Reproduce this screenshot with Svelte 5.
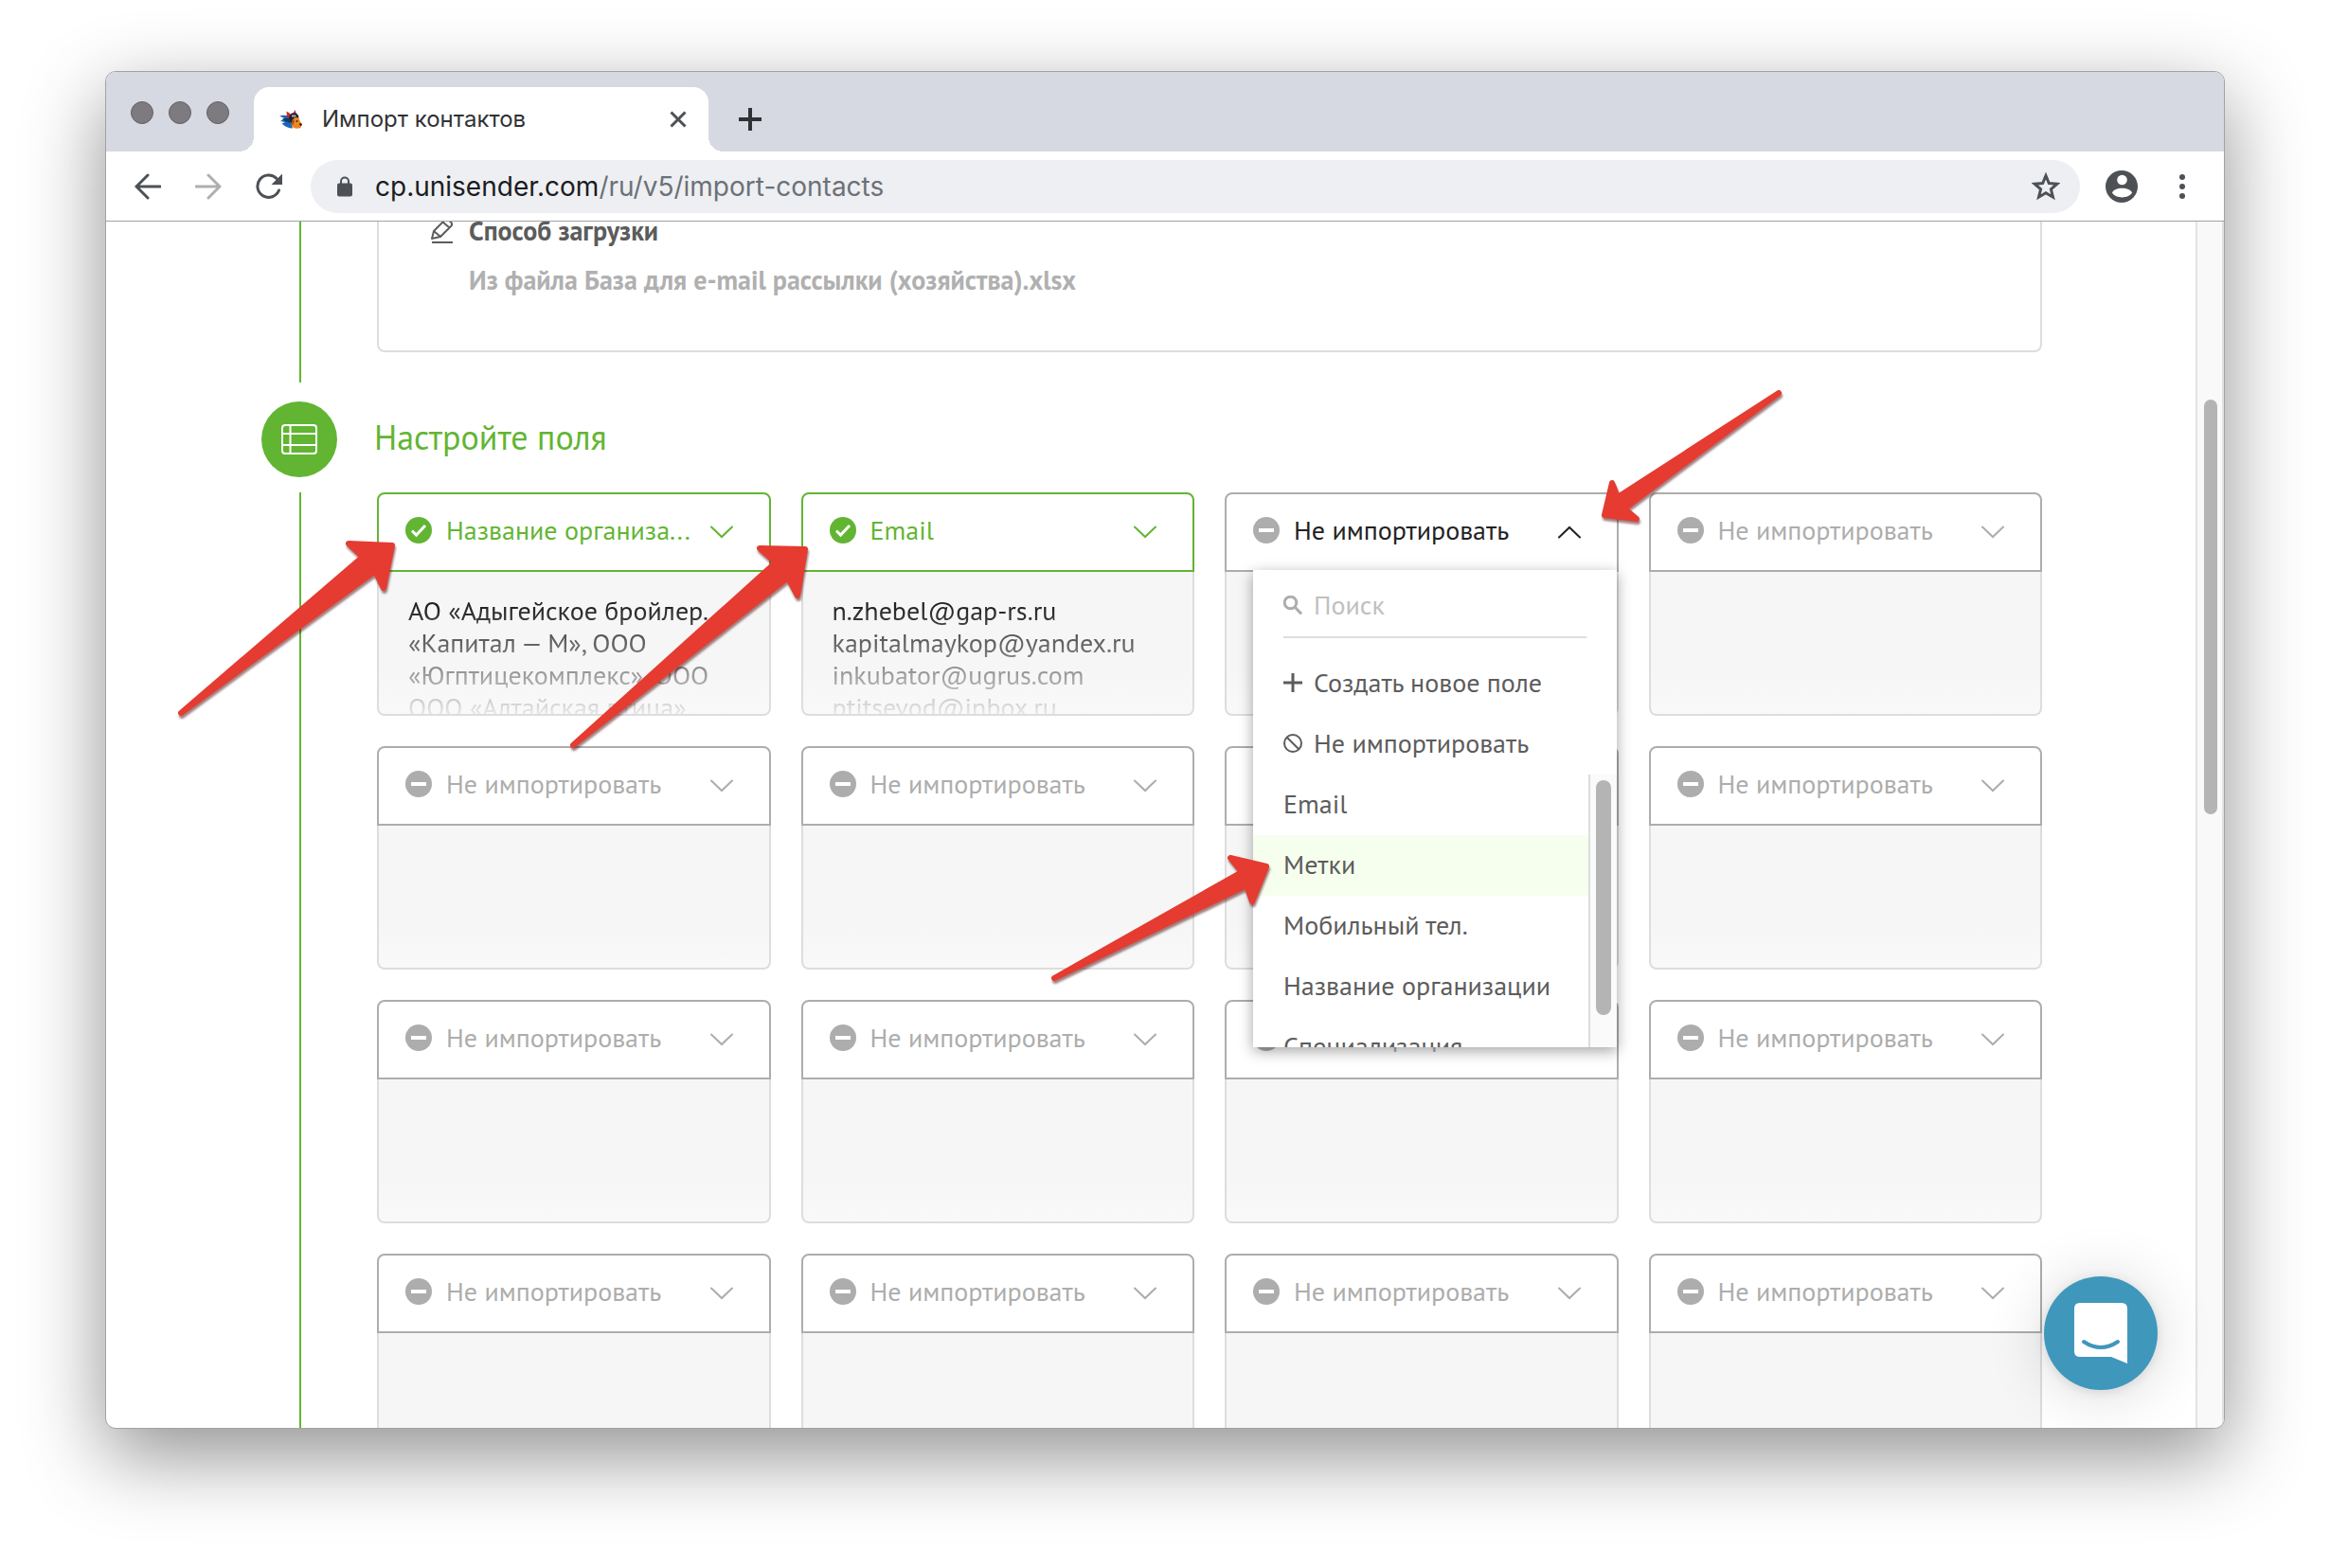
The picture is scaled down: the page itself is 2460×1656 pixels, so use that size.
<script lang="ts">
  type Field = { label: string; matched?: boolean; open?: boolean; lines?: string[] };

  const skip = 'Не импортировать';
  const fields: Field[] = [
    {
      label: 'Название организа...',
      matched: true,
      lines: ['АО «Адыгейское бройлер.', '«Капитал — М», ООО', '«Югптицекомплекс», ООО', 'ООО «Алтайская птица»'],
    },
    {
      label: 'Email',
      matched: true,
      lines: ['n.zhebel@gap-rs.ru', 'kapitalmaykop@yandex.ru', 'inkubator@ugrus.com', 'ptitsevod@inbox.ru'],
    },
    { label: skip, open: true },
    ...Array.from({ length: 13 }, () => ({ label: skip })),
  ];

  const options = ['Email', 'Метки', 'Мобильный тел.', 'Название организации', 'Специализация'];
  const hovered = 'Метки';

  const arrows = [
    '191,753 383,588 368,574 414,576 405,621 396,603',
    '605,787 819,594 802,579 850,580 842,629 832,610',
    '1878,415 1708,525 1702,510 1694,544 1728,548 1715,537',
    '1113,1033 1311,921 1299,906 1337,915 1322,952 1316,935',
  ];
</script>

{#snippet chevron(up: boolean)}
  <svg class="chevron" viewBox="0 0 24 14" aria-hidden="true">
    <path d={up ? 'M1 12.5 12 2l11 10.5' : 'M1 1.5 12 12 23 1.5'} />
  </svg>
{/snippet}

<div class="desktop">
  <div class="window">
    <header class="tabs">
      <div class="lights"><i></i><i></i><i></i></div>
      <div class="tab">
        <svg class="favicon" viewBox="0 0 24 20" aria-hidden="true">
          <path d="M0 6.500q5-1.500 11 .5l3 12.500q-6 0-11.500-5L6 13l-5-1 4.500-3z" fill="#1c66b8" />
          <path d="m3 9.500 7-1 1.500 5.500L5 11.500z" fill="#123a70" />
          <path d="M8 7.500 7.500 1.500l4 2.500L10 9zM14.500 3.500 16.500 0 18 4.500z" fill="#d9222f" />
          <path d="M10 9.500C10 4 14 2.500 17 3.500c2.500.8 3.500 3 3.500 5L16 10l-3.500 4.500z" fill="#1f2227" />
          <path d="M13 5.500h4.500v2H13z" fill="#a9b2bd" />
          <path d="M15 9q3-2 5.500 0 1.500 4 3.500 6l-1.500 4q-4 1.500-7.500 0-3-2-2.500-5z" fill="#ec8523" />
          <path d="m13.500 10.500 2.500 1-2 5-1.500-2z" fill="#a24f14" />
          <path d="m21.500 14 2.500 1-1 2-2-1zM18 11l1.500.5-.5 1.500-1.500-.5z" fill="#221d1e" />
        </svg>
        <span class="tab-title">Импорт контактов</span>
        <button class="tab-close" aria-label="Закрыть вкладку">
          <svg viewBox="0 0 18 18"><path d="m1.500 1.500 15 15m0-15-15 15" /></svg>
        </button>
      </div>
      <button class="new-tab" aria-label="Новая вкладка">
        <svg viewBox="0 0 24 24"><path d="M12 0v24M0 12h24" /></svg>
      </button>
    </header>

    <nav class="toolbar">
      <button class="tool" aria-label="Назад">
        <svg viewBox="0 0 28 28"><path d="M27 14H3M14 2 2 14l12 12" /></svg>
      </button>
      <button class="tool dim" aria-label="Вперёд">
        <svg viewBox="0 0 28 28"><path d="M1 14h24M14 2l12 12-12 12" /></svg>
      </button>
      <button class="tool" aria-label="Обновить">
        <svg viewBox="0 0 28 28">
          <path d="M24.500 18A11.700 11.700 0 1 1 22 5.500" />
          <path class="solid" d="M28 .5v11.500H16.500z" />
        </svg>
      </button>
      <div class="address">
        <svg class="lock" viewBox="0 0 16 22" aria-hidden="true">
          <path d="M4 9V5.500a4 4 0 0 1 8 0V9" fill="none" stroke="#4d5156" stroke-width="2" />
          <rect y="7.500" width="16" height="14" rx="2" fill="#4d5156" />
        </svg>
        <div class="url" role="textbox" tabindex="0" aria-label="Адрес">cp.unisender.com<span>/ru/v5/import-contacts</span></div>
        <button class="star" aria-label="Добавить в закладки">
          <svg viewBox="0 0 30 30"><path d="m15 3.500 3.300 8 8.700.7-6.600 5.600 2.100 8.400-7.500-4.500-7.500 4.500 2.100-8.400L3 12.200l8.700-.7z" /></svg>
        </button>
      </div>
      <button class="profile" aria-label="Профиль">
        <svg viewBox="0 0 34 34">
          <circle cx="17" cy="17" r="17" fill="#4d5156" />
          <circle cx="17.500" cy="10" r="5.300" fill="#fff" />
          <path d="M7 23.500c2-6.500 19-6.500 21 0-4 6.500-17 6.500-21 0z" fill="#fff" />
        </svg>
      </button>
      <button class="dots" aria-label="Меню браузера"><i></i><i></i><i></i></button>
    </nav>

    <div class="viewport">
      <main class="page">
        <section class="step">
          <div class="rail"><span class="line"></span></div>
          <div class="source">
            <div class="source-head">
              <svg class="pencil" viewBox="0 0 24 26" aria-hidden="true">
                <path d="m1 21 2-8L14.500 1.500q2-1.500 4 0l2.500 2q2 2 .5 4L10 19zM3 13l7 6M12.500 3.500l7 6M1 25h22" />
              </svg>
              <h3>Способ загрузки</h3>
            </div>
            <p>Из файла База для e-mail рассылки (хозяйства).xlsx</p>
          </div>
        </section>

        <section class="step">
          <div class="rail">
            <span class="badge">
              <svg viewBox="0 0 38 32" aria-hidden="true">
                <rect x="1" y="1" width="36" height="30" rx="3" />
                <path d="M1 10h36M1 22h36M9.500 1v30" />
              </svg>
            </span>
            <span class="line"></span>
          </div>
          <div>
            <h2>Настройте поля</h2>
            <div class="grid">
              {#each fields as field, i}
                <article class="card" class:matched={field.matched} class:open={field.open}>
                  <div class="card-head">
                    <svg class="state" viewBox="0 0 28 28" aria-hidden="true">
                      <circle cx="14" cy="14" r="14" />
                      {#if field.matched}
                        <path d="m7 14.500 4.500 4.500L21 9" stroke-width="3" />
                      {:else}
                        <path d="M6 14h16" stroke-width="4" />
                      {/if}
                    </svg>
                    {#if field.open}
                      <button class="choice" aria-haspopup="listbox" aria-expanded="true">{field.label}</button>
                    {:else}
                      <select class="choice" aria-label={`Поле ${i + 1}`}>
                        <option>{field.label}</option>
                      </select>
                    {/if}
                    {@render chevron(!!field.open)}
                  </div>
                  <div class="card-body">
                    {#if field.lines}
                      <div class="sample">
                        {#each field.lines as line}<div>{line}</div>{/each}
                      </div>
                    {/if}
                  </div>

                  {#if field.open}
                    <div class="menu">
                      <label class="search">
                        <svg viewBox="0 0 20 20" aria-hidden="true">
                          <circle cx="7.500" cy="7.500" r="6.300" /><path d="m12 12 7 7.500" />
                        </svg>
                        <input type="text" placeholder="Поиск" aria-label="Поиск" />
                      </label>
                      <button class="item">
                        <svg viewBox="0 0 20 20" aria-hidden="true"><path d="M10 0v20M0 10h20" stroke-width="3" /></svg>
                        Создать новое поле
                      </button>
                      <button class="item">
                        <svg viewBox="0 0 20 20" aria-hidden="true"><circle cx="10" cy="10" r="9" /><path d="m3.500 3.500 13 13" /></svg>
                        Не импортировать
                      </button>
                      <div class="options">
                        <div class="option-list">
                          {#each options as option}
                            <button class="item" class:hovered={option === hovered}>{option}</button>
                          {/each}
                        </div>
                        <div class="menu-scroll"><span></span></div>
                      </div>
                    </div>
                  {/if}
                </article>
              {/each}
            </div>
          </div>
        </section>
      </main>
      <div class="page-scroll"><span></span></div>
      <button class="chat" aria-label="Открыть чат">
        <svg viewBox="0 0 120 120">
          <path d="M38 28h44q6 0 6 6v58l-17-7H38q-6 0-6-6V34q0-6 6-6z" fill="#fff" />
          <path d="M42 69q18 12 36 0" fill="none" stroke="#4097bc" stroke-width="4" stroke-linecap="round" />
        </svg>
      </button>
    </div>
  </div>

  <svg class="arrows" aria-hidden="true">
    {#each arrows as points}<polygon {points} />{/each}
  </svg>
</div>

<style>
  :global(body) { margin: 0; background: #fff; }
  .desktop {
    position: relative;
    box-sizing: border-box;
    display: flex;
    height: 100vh;
    padding: 75px 111px 147px;
    overflow: hidden;
    font-family: "PT Sans", "Noto Sans", sans-serif;
    font-size: 28px;
    line-height: 34px;
  }
  .desktop :global(*) { box-sizing: border-box; }
  button, select, input { margin: 0; padding: 0; border: 0; background: none; font: inherit; color: inherit; }
  svg { display: block; flex: none; fill: none; }
  h2, h3, p { margin: 0; }

  .window {
    flex: 1;
    min-width: 0;
    display: flex;
    flex-direction: column;
    overflow: hidden;
    border: 1px solid #a2a2a4;
    border-radius: 11px;
    background: #fff;
    box-shadow: 0 28px 84px rgba(0, 0, 0, .44);
  }

  .tabs { display: flex; height: 84px; padding-left: 26px; background: #d6d9e1; font-family: Inter, sans-serif; }
  .lights { display: flex; gap: 16px; padding-top: 31px; margin-right: 26px; }
  .lights i { width: 24px; height: 24px; border: 1px solid #626066; border-radius: 50%; background: #7d7b80; }
  .tab {
    position: relative;
    display: flex;
    align-items: center;
    width: 480px;
    height: 68px;
    margin-top: 16px;
    padding: 0 23px 0 27px;
    border-radius: 16px 16px 0 0;
    background: #fff;
    color: #303236;
    font-size: 24px;
  }
  .tab::before, .tab::after {
    content: "";
    position: absolute;
    bottom: 0;
    width: 16px;
    height: 16px;
  }
  .tab::before { right: 100%; background: radial-gradient(circle at 0 0, #d6d9e1 16px, #fff 16px); }
  .tab::after { left: 100%; background: radial-gradient(circle at 100% 0, #d6d9e1 16px, #fff 16px); }
  .favicon { width: 24px; height: 20px; }
  .tab-title { flex: 1; margin-left: 21px; }
  .tab-close svg { width: 18px; height: 18px; stroke: #4d5156; stroke-width: 3; }
  .new-tab { margin: 16px 0 0 32px; }
  .new-tab svg { width: 24px; height: 24px; stroke: #303236; stroke-width: 4; }

  .toolbar {
    display: flex;
    align-items: center;
    height: 74px;
    padding: 0 41px 0 30px;
    border-bottom: 1px solid #a2a2a4;
    font-family: Inter, sans-serif;
    font-size: 28px;
  }
  .tool { width: 28px; margin-right: 36px; }
  .tool svg { width: 28px; height: 28px; stroke: #4d5156; stroke-width: 3; stroke-linecap: round; }
  .tool.dim svg { stroke: #adafb1; }
  .tool .solid { fill: #4d5156; stroke: none; }
  .tool:nth-of-type(3) { margin-right: 30px; }
  .address {
    flex: 1;
    display: flex;
    align-items: center;
    height: 56px;
    padding: 0 21px 0 28px;
    border-radius: 28px;
    background: #eeeff2;
  }
  .lock { width: 16px; height: 22px; }
  .url { flex: 1; margin-left: 24px; color: #1b1c1f; }
  .url span { color: #6b7178; }
  .star svg { width: 30px; height: 30px; stroke: #4d5156; stroke-width: 3; }
  .profile { margin-left: 27px; }
  .profile svg { width: 34px; height: 34px; }
  .dots { display: grid; gap: 4px; margin-left: 44px; }
  .dots i { width: 6px; height: 6px; border-radius: 50%; background: #4d5156; }

  .viewport { position: relative; flex: 1; min-height: 0; display: flex; overflow: hidden; }
  .page { flex: 1; min-width: 0; margin-top: -48px; padding: 0 162px 0 164px; }
  .step { display: grid; grid-template-columns: 80px minmax(0, 1fr); column-gap: 39px; }
  .rail { display: flex; flex-direction: column; }
  .line { flex: 1; width: 2px; margin-left: 40px; background: #62b532; }
  .badge {
    display: grid;
    place-items: center;
    width: 80px;
    height: 80px;
    margin: 20px 0 16px;
    border-radius: 50%;
    background: #62b532;
  }
  .badge svg { width: 38px; height: 32px; stroke: #fff; stroke-width: 2; }
  .source, .grid { margin-left: 3px; }
  .source { height: 186px; margin-bottom: 32px; padding: 30px 55px; border: 2px solid #ddd; border-radius: 8px; }
  .source-head { display: flex; align-items: center; gap: 16px; color: #5c5c5c; }
  .source h3, .source p { font-size: 28px; font-weight: 700; line-height: 52px; }
  .source p { margin-left: 40px; color: #b0b0b0; }
  .pencil { width: 24px; height: 26px; stroke: #5c5c5c; stroke-width: 2; stroke-linejoin: round; }

  h2 { height: 116px; padding-top: 16px; color: #62b532; font-size: 36px; font-weight: 400; line-height: 84px; }
  .grid { display: grid; grid-template-columns: repeat(4, minmax(0, 1fr)); gap: 32px; }
  .card { position: relative; color: #adadad; }
  .card.matched { color: #62b532; }
  .card-head {
    display: flex;
    align-items: center;
    gap: 15px;
    height: 84px;
    padding: 0 38px 4px 28px;
    border: 2px solid #adadad;
    border-radius: 8px 8px 0 0;
    background: #fff;
  }
  .matched .card-head { border-color: #62b532; }
  .state { width: 28px; height: 28px; fill: currentColor; }
  .state path { fill: none; stroke: #fff; }
  .choice { flex: 1; min-width: 0; height: 36px; appearance: none; line-height: 34px; text-align: left; white-space: nowrap; outline: none; }
  .open .choice { color: #222; }
  .chevron { width: 24px; height: 14px; margin-top: 4px; stroke: currentColor; stroke-width: 2; stroke-linecap: round; }
  .open .chevron { stroke: #222; }
  .card-body {
    height: 152px;
    padding: 24px 31px 0;
    overflow: hidden;
    border: 2px solid #ddd;
    border-top: 0;
    border-radius: 0 0 8px 8px;
    background: linear-gradient(#f6f6f6 70%, #f9f9f9);
  }
  .sample {
    height: 126px;
    overflow: hidden;
    color: #222;
    white-space: nowrap;
    mask-image: linear-gradient(#000 10%, rgba(0, 0, 0, .5) 60%, rgba(0, 0, 0, .08));
  }

  .menu {
    position: absolute;
    z-index: 2;
    top: 82px;
    left: 30px;
    right: 2px;
    background: #fff;
    color: #5c5c5c;
    box-shadow: 0 4px 14px rgba(0, 0, 0, .36);
  }
  .search {
    display: flex;
    align-items: center;
    gap: 12px;
    height: 72px;
    margin: 0 32px 16px;
    padding-top: 4px;
    border-bottom: 2px solid #ddd;
  }
  .search svg { width: 20px; height: 20px; stroke: #adadad; stroke-width: 3; }
  .search input { flex: 1; min-width: 0; outline: none; }
  .search input::placeholder { color: #c0c0c0; opacity: 1; }
  .item {
    display: flex;
    align-items: center;
    gap: 12px;
    width: 100%;
    height: 64px;
    padding: 0 0 2px 32px;
    text-align: left;
    white-space: nowrap;
  }
  .item svg { width: 20px; height: 20px; stroke: #5c5c5c; stroke-width: 2; }
  .item.hovered { background: #f6ffee; }
  .options { display: flex; height: 288px; overflow: hidden; }
  .option-list { flex: 1; min-width: 0; }
  .menu-scroll { width: 30px; padding: 6px; border-left: 2px solid #ddd; background: #fafafa; }
  .menu-scroll span { display: block; width: 16px; height: 248px; border-radius: 8px; background: #b4b4b4; }

  .page-scroll { width: 30px; padding: 188px 5px 0 7px; border: solid #e2e2e2; border-width: 0 2px; background: #f9f9f9; }
  .page-scroll span { display: block; height: 438px; border-radius: 8px; background: #b4b4b4; }
  .chat {
    position: absolute;
    right: 70px;
    bottom: 40px;
    z-index: 3;
    width: 120px;
    height: 120px;
    border-radius: 50%;
    background: #4097bc;
    box-shadow: 0 2px 12px rgba(0, 0, 0, .1), 0 4px 64px rgba(0, 0, 0, .16);
  }
  .arrows { position: absolute; inset: 0; z-index: 4; width: 100%; height: 100%; pointer-events: none; }
  .arrows polygon {
    fill: #e53b31;
    stroke: #e53b31;
    stroke-width: 6;
    stroke-linejoin: round;
    filter: drop-shadow(1px 3px 1px rgba(70, 0, 0, .5));
  }
</style>
